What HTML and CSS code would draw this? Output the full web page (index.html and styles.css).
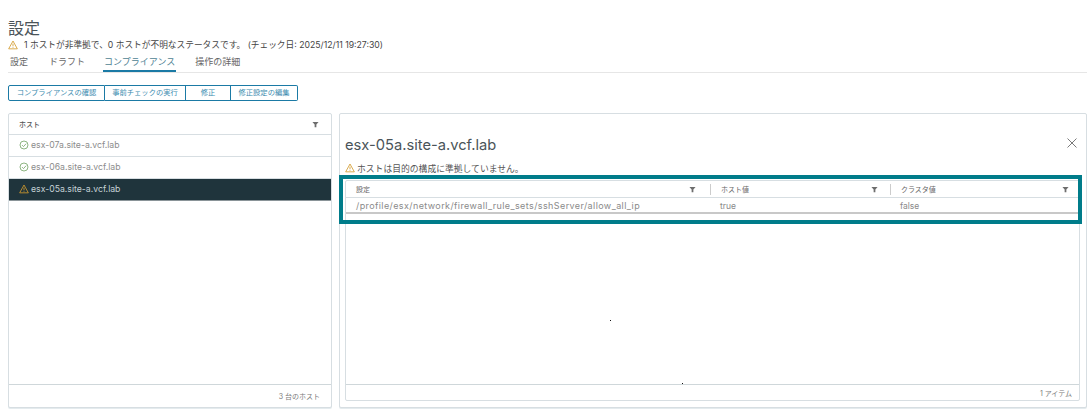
FILE: index.html
```html
<!DOCTYPE html>
<html lang="ja">
<head>
<meta charset="utf-8">
<title>設定</title>
<link rel="stylesheet" href="styles.css">
</head>
<body>
<header class="head">
  <h1 class="title">設定</h1>
  <p class="status">
    <svg class="warn" viewBox="0 0 12 12"><path d="M6 1.2 11.2 10.6H.8Z M6 4.4V7.6 M6 8.6V9.4"/></svg>
    <span>1 ホストが非準拠で、0 ホストが不明なステータスです。 (チェック日: 2025/12/11 19:27:30)</span>
  </p>
  <nav class="tabs">
    <span class="tab">設定</span>
    <span class="tab draft">ドラフト</span>
    <span class="tab active">コンプライアンス</span>
    <span class="tab">操作の詳細</span>
  </nav>
</header>
<div class="actions">
  <button class="btn b1">コンプライアンスの確認</button><button class="btn b2">事前チェックの実行</button><button class="btn b3">修正</button><button class="btn b4">修正設定の編集</button>
</div>
<main class="split">
  <section class="hosts">
    <div class="hosts-head"><span>ホスト</span><svg class="filter" viewBox="0 0 8 8"><path d="M.5 1h7L5 4v3.2H3V4Z"/></svg></div>
    <div class="host"><svg class="ok" viewBox="0 0 12 12"><circle cx="6" cy="6" r="4.8"/><path d="M3.6 6.1 5.4 7.9 8.6 4.4"/></svg>esx-07a.site-a.vcf.lab</div>
    <div class="host"><svg class="ok" viewBox="0 0 12 12"><circle cx="6" cy="6" r="4.8"/><path d="M3.6 6.1 5.4 7.9 8.6 4.4"/></svg>esx-06a.site-a.vcf.lab</div>
    <div class="host selected"><svg class="warn" viewBox="0 0 12 12"><path d="M6 1.2 11.2 10.6H.8Z M6 4.4V7.6 M6 8.6V9.4"/></svg>esx-05a.site-a.vcf.lab</div>
    <div class="grow"></div>
    <div class="foot">3 台のホスト</div>
  </section>
  <section class="detail">
    <div class="detail-head">
      <h2 class="host-title">esx-05a.site-a.vcf.lab</h2>
      <svg class="close" viewBox="0 0 12 12"><path d="M1.5 1.5 10.5 10.5M10.5 1.5 1.5 10.5"/></svg>
    </div>
    <p class="notice">
      <svg class="warn" viewBox="0 0 12 12"><path d="M6 1.2 11.2 10.6H.8Z M6 4.4V7.6 M6 8.6V9.4"/></svg>
      <span>ホストは目的の構成に準拠していません。</span>
    </p>
    <div class="grid">
      <div class="row row-head">
        <div class="cell c1"><span>設定</span><svg class="filter" viewBox="0 0 8 8"><path d="M.5 1h7L5 4v3.2H3V4Z"/></svg></div>
        <div class="cell c2"><span>ホスト値</span><svg class="filter" viewBox="0 0 8 8"><path d="M.5 1h7L5 4v3.2H3V4Z"/></svg></div>
        <div class="cell c3"><span>クラスタ値</span><svg class="filter" viewBox="0 0 8 8"><path d="M.5 1h7L5 4v3.2H3V4Z"/></svg></div>
      </div>
      <div class="row row-body">
        <div class="cell c1 path">/profile/esx/network/firewall_rule_sets/sshServer/allow_all_ip</div>
        <div class="cell c2">true</div>
        <div class="cell c3">false</div>
      </div>
      <div class="grow"></div>
      <div class="foot">1 アイテム</div>
    </div>
    <div class="highlight"></div>
    <i class="speck s1"></i>
    <i class="speck s2"></i>
  </section>
</main>
</body>
</html>
```
FILE: styles.css
```css
* { box-sizing: border-box; }
html, body { margin: 0; height: 100%; }
body {
  width: 1092px;
  height: 413px;
  overflow: hidden;
  padding: 0 5px 5px 8px;
  display: flex;
  flex-direction: column;
  background: #fff;
  color: #565656;
  font-family: Inter, "Noto Sans CJK JP", sans-serif;
}
svg { display: block; flex: none; fill: none; }
.head { padding-top: 19px; }
.title { margin: 0; font-size: 16px; line-height: 18px; font-weight: 400; color: #4a5459; }
.status {
  margin: 2px 0 0;
  display: flex;
  align-items: center;
  gap: 6px;
  height: 12px;
  font-size: 8.7px;
  line-height: 12px;
  color: #444;
}
.warn { width: 10px; height: 10px; stroke: #d29a2e; stroke-width: 1; }
.tabs {
  margin-top: 4px;
  height: 18px;
  padding-top: 1px;
  display: flex;
  border-bottom: 1px solid #e6e6e6;
  font-size: 9px;
  color: #666;
}
.tab { margin: 0 20px 0 2px; line-height: 12px; height: 17px; }
.tab:first-child { margin-right: 19px; }
.tab.draft { margin-right: 18px; }
.tab.active {
  height: 16px;
  margin: 0 17px 0 0;
  padding: 0 1px;
  color: #4e7f93;
  border-bottom: 2px solid #1b7aa5;
}
.actions { margin-top: 12px; display: flex; height: 16px; }
.btn {
  flex: none;
  height: 16px;
  padding: 0;
  background: #fff;
  border: 1px solid #1b7aa5;
  border-left: 0;
  font: 7.3px/14px Inter, "Noto Sans CJK JP", sans-serif;
  color: #3d8caf;
}
.b1 { width: 97px; border-left: 1px solid #1b7aa5; border-radius: 2px 0 0 2px; }
.b2 { width: 81px; }
.b3 { width: 45px; }
.b4 { width: 67px; border-radius: 0 2px 2px 0; }
.split { flex: 1; min-height: 0; margin-top: 12px; display: flex; gap: 7px; }
.hosts, .detail {
  background: #fff;
  border: 1px solid #d7dee2;
  border-radius: 2px;
  box-shadow: 0 1px 0 #e4ebee;
  display: flex;
  flex-direction: column;
}
.hosts { width: 324px; flex: none; }
.hosts-head {
  height: 21px;
  padding: 0 12px 0 10px;
  display: flex;
  align-items: center;
  justify-content: space-between;
  border-bottom: 1px solid #d7dee2;
  font-size: 7px;
  font-weight: 500;
  color: #565656;
}
.filter { width: 7px; height: 7px; fill: #6d6d6d; }
.host {
  height: 22px;
  padding: 0 0 1px 10px;
  display: flex;
  align-items: center;
  gap: 2px;
  border-bottom: 1px solid #d7dee2;
  font-size: 8.7px;
  color: #8c8c8c;
}
.ok { width: 10px; height: 10px; stroke: #78a76a; stroke-width: 1; }
.host.selected { height: 22px; background: #1f343c; color: #c6d2d7; border-bottom: 1px solid #8a9498; }
.grow { flex: 1; }
.foot {
  height: 23px;
  padding-right: 11px;
  display: flex;
  align-items: center;
  justify-content: flex-end;
  border-top: 1px solid #cfd7da;
  font-size: 7px;
  color: #7a7a7a;
}
.detail { flex: 1; position: relative; padding: 0 6px 6px 5px; }
.detail-head { display: flex; justify-content: space-between; align-items: center; margin-top: 19px; height: 24px; padding-right: 2px; }
.host-title { margin: 0; font-size: 14.7px; line-height: 24px; font-weight: 400; color: #4a5459; }
.close { width: 12px; height: 12px; stroke: #7a7a7a; stroke-width: 1; margin-top: -4px; }
.notice {
  margin: 5px 0 0;
  display: flex;
  align-items: center;
  gap: 2px;
  height: 12px;
  font-size: 8.8px;
  color: #555;
}
.grid {
  flex: 1;
  min-height: 0;
  margin-top: 6px;
  border: 1px solid #d7dee2;
  border-radius: 2px;
  display: flex;
  flex-direction: column;
}
.grid .foot { height: 16px; padding-right: 7px; }
.row { display: flex; }
.row-head { height: 17px; align-items: center; border-bottom: 1px solid #d7dee2; font-size: 7px; color: #666; }
.row-head .cell { height: 11px; justify-content: space-between; }
.row-head .c2, .row-head .c3 { border-left: 1px solid #ccc; }
.row-body { height: 16px; padding-top: 1px; align-items: center; font-size: 8.5px; color: #8a8a8a; border-bottom: 2px solid #c8c8c8; }
.cell { display: flex; align-items: center; }
.c1 { width: 364px; flex: none; padding: 0 14px 0 10px; }
.c2 { width: 180px; flex: none; padding: 0 12px 0 10px; }
.c3 { flex: 1; padding: 0 10px 0 10px; }
.path { font-size: 9px; letter-spacing: .4px; white-space: nowrap; }
.highlight {
  position: absolute;
  left: -1px;
  top: 61px;
  width: 743px;
  height: 49px;
  border: 4px solid #007c8a;
  pointer-events: none;
}
.speck { position: absolute; width: 1px; height: 1px; background: #111; }
.s1 { left: 270px; top: 206px; }
.s2 { left: 342px; top: 269px; }
```
